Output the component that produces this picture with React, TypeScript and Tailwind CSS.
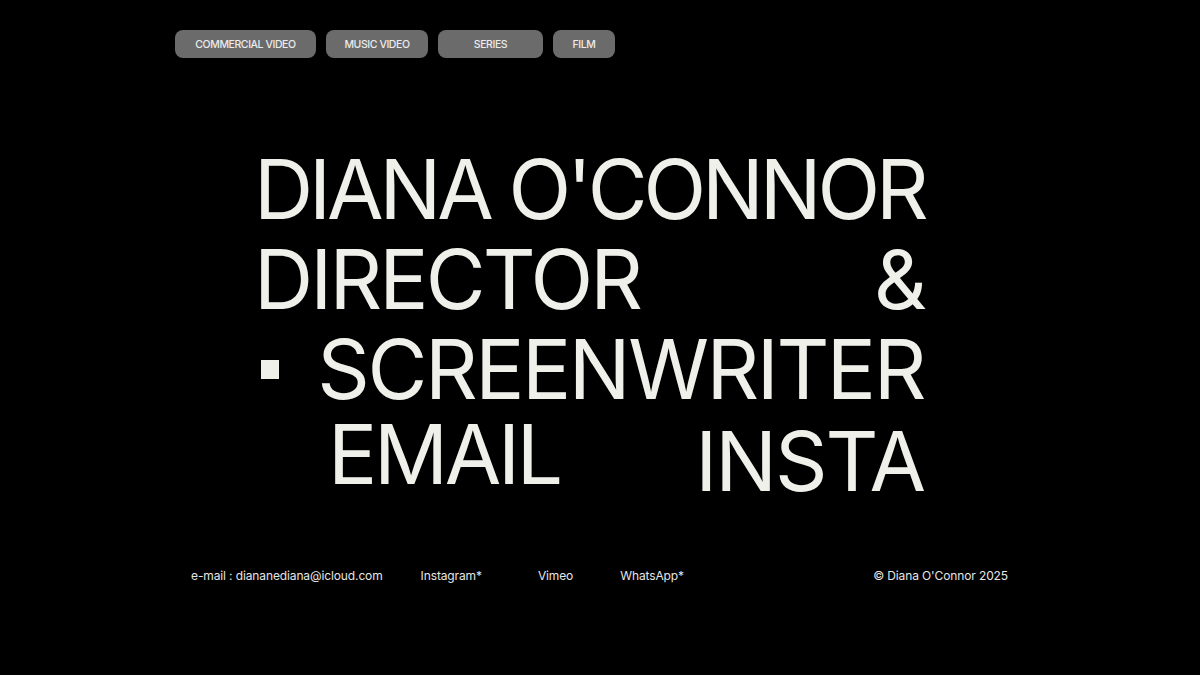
import React from 'react';

const categories = [
  { label: 'COMMERCIAL VIDEO', w: 'w-[141px]' },
  { label: 'MUSIC VIDEO', w: 'w-[102px]' },
  { label: 'SERIES', w: 'w-[105px]' },
  { label: 'FILM', w: 'w-[62px]' },
];

export default function App() {
  return (
    <div className="min-h-[3300px] bg-black text-[#f0f0eb] font-['Inter',sans-serif]">
      <nav className="flex gap-[10px] pl-[175px] pt-[30px]">
        {categories.map((c) => (
          <button
            key={c.label}
            className={`${c.w} h-[28px] rounded-[8px] bg-[#6b6b6b] pt-[1px] text-[10.5px] font-medium tracking-[-0.04em] text-[#ececec]`}
          >
            {c.label}
          </button>
        ))}
      </nav>

      <main className="ml-[254px] mt-[87px] w-[670px] text-[82px] leading-[90px] font-normal uppercase">
        <div className="whitespace-nowrap tracking-[-0.05em]">DIANA O'CONNOR</div>
        <div className="flex justify-between tracking-[-0.035em]">
          <span>DIRECTOR</span>
          <span>&amp;</span>
        </div>
        <div className="flex items-center justify-between tracking-[-0.03em]">
          <span className="ml-[7px] mt-[-2px] h-[19px] w-[18px] bg-[#f0f0eb]" />
          <span>SCREENWRITER</span>
        </div>
        <div className="flex items-start justify-between">
          <a className="ml-[74px] leading-[80px] tracking-[-0.04em]">EMAIL</a>
          <a className="leading-[94px] tracking-[-0.025em]">INSTA</a>
        </div>
      </main>

      <footer className="mt-[58px] flex items-center justify-between pl-[191px] pr-[192px] text-[12px] tracking-[-0.01em] text-[#e6e6e6]">
        <div className="flex items-center">
          <span>e-mail : diananediana@icloud.com</span>
          <a className="ml-[38px]">Instagram*</a>
          <a className="ml-[56px]">Vimeo</a>
          <a className="ml-[47px]">WhatsApp*</a>
        </div>
        <span>© Diana O'Connor 2025</span>
      </footer>
    </div>
  );
}
